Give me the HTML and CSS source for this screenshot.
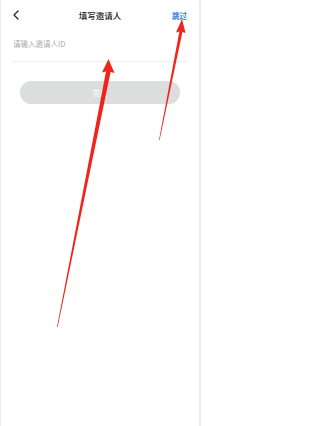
FILE: index.html
```html
<!DOCTYPE html>
<html lang="zh">
<head>
<meta charset="utf-8">
<link rel="stylesheet" href="styles.css">
</head>
<body>
<div class="page">
  <header class="nav">
    <span class="back">
      <svg width="6" height="10" viewBox="0 0 6 10"><path d="M5 1 L1 5 L5 9" fill="none" stroke="#222" stroke-width="1.2" stroke-linecap="round" stroke-linejoin="round"/></svg>
    </span>
    <span class="title">填写邀请人</span>
    <span class="skip">跳过</span>
  </header>
  <div class="field">
    <span class="placeholder">请输入邀请人ID</span>
  </div>
  <div class="btn-wrap">
    <div class="btn">完成</div>
  </div>
  <svg class="arrows" width="201" height="426" viewBox="0 0 201 426">
    <polygon points="108.5,59 102,72.5 106,71.5 57,327 57.7,327 110.6,72 114.5,73" fill="#f2231b"/>
    <polygon points="182,19 176,32.5 179.4,31.5 159,140 159.6,140 182.4,32 185.5,33" fill="#f2231b"/>
  </svg>
</div>
</body>
</html>
```

FILE: styles.css
```css
html, body {
  margin: 0;
  padding: 0;
  background: #fff;
}
.page {
  position: relative;
  width: 198px;
  height: 426px;
  border-left: 1px solid #efefef;
  border-right: 2px solid #efefef;
  font-family: "Noto Sans CJK SC", "Liberation Sans", sans-serif;
  overflow: hidden;
}
.nav {
  height: 30px;
  display: flex;
  align-items: center;
  justify-content: space-between;
  padding: 0 12px;
  position: relative;
}
.back {
  display: flex;
  width: 20px;
}
.title {
  position: absolute;
  left: 0;
  right: 0;
  text-align: center;
  font-size: 8.5px;
  font-weight: 500;
  color: #222;
  pointer-events: none;
}
.skip {
  font-size: 7.5px;
  color: #3b7fe0;
  font-weight: 700;
}
.field {
  margin: 0 12px;
  height: 31px;
  display: flex;
  align-items: center;
  border-bottom: 1px solid #eeeeee;
}
.placeholder {
  font-size: 7.5px;
  color: #aaaaaa;
  position: relative;
  top: -2px;
}
.btn-wrap {
  padding: 19px 19px 0 19px;
}
.btn {
  height: 23px;
  border-radius: 12px;
  background: #dcdddd;
  color: #fff;
  font-size: 7.5px;
  display: flex;
  align-items: center;
  justify-content: center;
}
.arrows {
  position: absolute;
  left: -1px;
  top: 0;
}
```
